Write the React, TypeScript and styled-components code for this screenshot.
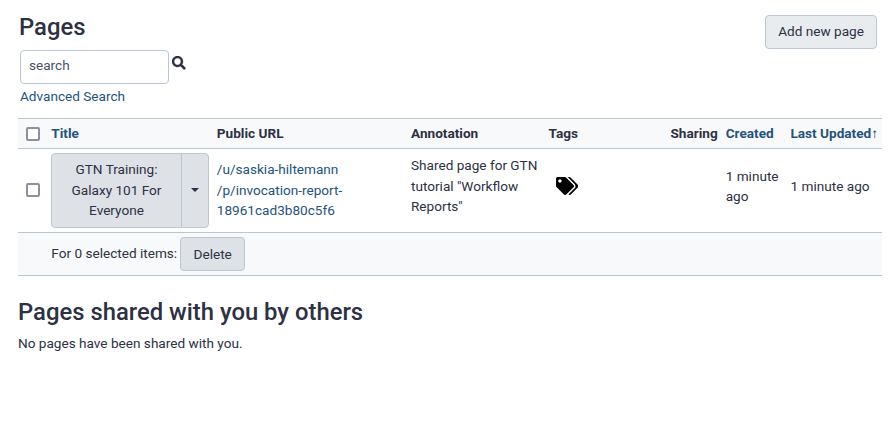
import React from "react";
import styled, { createGlobalStyle } from "styled-components";
import { FaSearch, FaTags } from "react-icons/fa";

const ink = "#2c3143";
const link = "#25537b";
const line = "#bdc6d0";

const GlobalStyle = createGlobalStyle`
  * { box-sizing: border-box; }
  body {
    margin: 0;
    background: #fff;
    color: ${ink};
    font-family: Roboto, "Noto Sans", sans-serif;
    font-size: 13.6px;
    line-height: 20.4px;
  }
`;

const Page = styled.main`
  width: 893px;
  height: 440px;
  padding: 12px 11px 0 18px;
  overflow: hidden;
`;

const TopBar = styled.header`
  display: flex;
  justify-content: space-between;
  height: 106px;
  padding-right: 5px;
`;

const Heading = styled.h2<{ $indent?: number }>`
  margin: 0 0 0 ${(p) => p.$indent ?? 0}px;
  font-size: 23.83px;
  line-height: 29px;
  font-weight: 500;
`;

const TopHeading = styled(Heading)`
  padding-top: 1px;
`;

const SearchRow = styled.div`
  display: flex;
  margin: 8px 0 2px 2px;
`;

const SearchInput = styled.input`
  width: 149px;
  height: 34px;
  padding: 0 8px 4px;
  border: 1px solid #bdc6d8;
  border-radius: 4px;
  background: #fff;
  font: inherit;
  color: #495057;
  &::placeholder { color: #4a5068; opacity: 1; }
`;

const SearchIcon = styled(FaSearch)`
  margin: 6px 0 0 3px;
  width: 13.6px;
  height: 13.6px;
  stroke: currentColor;
  stroke-width: 12;
`;

const Link = styled.a<{ $indent?: number }>`
  display: block;
  margin-left: ${(p) => p.$indent ?? 0}px;
  color: ${link};
  text-decoration: none;
`;

const Button = styled.button<{ $light?: boolean }>`
  height: 34px;
  padding: 0 12px;
  border: 1px solid #bdc6d4;
  border-radius: 4px;
  background: ${(p) => (p.$light ? "#e9ecee" : "#dee1e6")};
  color: ${ink};
  font: inherit;
`;

const AddButton = styled(Button)`
  width: 112px;
  margin-top: 3px;
  padding-bottom: 2px;
`;

const DeleteButton = styled(Button)`
  width: 65px;
`;

const Table = styled.section`
  width: 864px;
`;

const Row = styled.div<{ $height: number; $shaded?: boolean }>`
  display: grid;
  grid-template-columns: 33.3px 165.5px 194.2px 137.5px 122px 55.2px 64.8px 91.5px;
  align-items: center;
  height: ${(p) => p.$height}px;
  background: ${(p) => (p.$shaded ? "#f8f9fb" : "#fff")};
  border-top: 1px solid ${line};
`;

const HeadCell = styled.div<{ $sortable?: boolean }>`
  color: ${(p) => (p.$sortable ? link : ink)};
  font-weight: 700;
  white-space: nowrap;
`;

const Arrow = styled.span`
  color: ${ink};
  font-weight: 400;
`;

const Checkbox = styled.input<{ $lift?: number }>`
  appearance: none;
  display: block;
  width: 14px;
  height: 14px;
  margin: 0 0 ${(p) => p.$lift ?? 0}px 8px;
  border: 2px solid #8f8f9d;
  border-radius: 2px;
  background: #fff;
`;

const Cell = styled.div<{ $lift?: number }>`
  padding-bottom: ${(p) => p.$lift ?? 0}px;
`;

const SplitButton = styled.div`
  display: flex;
  width: 158px;
  height: 75px;
  margin-left: -0.3px;
  border: 1px solid #bdc6d4;
  border-radius: 4px;
  background: #dee1e6;
`;

const TitleButton = styled.button`
  width: 130px;
  padding: 0 16px 1px;
  border: 0;
  border-right: 1px solid #bdc6d4;
  background: none;
  color: ${ink};
  font: inherit;
`;

const MenuButton = styled.button`
  display: flex;
  flex: 1;
  align-items: center;
  justify-content: center;
  padding: 0 0 2px;
  border: 0;
  background: none;
  &::after {
    content: "";
    border: 4px solid transparent;
    border-top-color: ${ink};
    border-bottom: 0;
  }
`;

const TagIcon = styled(FaTags)`
  display: block;
  width: 22.5px;
  height: 18px;
  margin-left: 7.5px;
  color: #000;
`;

const Footer = styled.div`
  display: flex;
  align-items: center;
  gap: 3px;
  height: 44px;
  padding-left: 33.3px;
  border: solid ${line};
  border-width: 1px 0;
  background: #f8f9fb;
`;

const FooterLabel = styled.span`
  padding-bottom: 2px;
`;

const SharedSection = styled.section`
  padding-top: 22px;
`;

const Note = styled.p`
  margin: 6px 0 0;
`;

export default function App() {
  return (
    <Page>
      <GlobalStyle />
      <TopBar>
        <div>
          <TopHeading $indent={1}>Pages</TopHeading>
          <SearchRow>
            <SearchInput placeholder="search" />
            <SearchIcon />
          </SearchRow>
          <Link $indent={2}>Advanced Search</Link>
        </div>
        <AddButton $light>Add new page</AddButton>
      </TopBar>
      <Table>
        <Row $height={30} $shaded>
          <Checkbox type="checkbox" />
          <HeadCell $sortable>Title</HeadCell>
          <HeadCell>Public URL</HeadCell>
          <HeadCell>Annotation</HeadCell>
          <HeadCell>Tags</HeadCell>
          <HeadCell>Sharing</HeadCell>
          <HeadCell $sortable>Created</HeadCell>
          <HeadCell $sortable>
            Last Updated<Arrow>↑</Arrow>
          </HeadCell>
        </Row>
        <Row $height={84}>
          <Checkbox type="checkbox" $lift={2} />
          <SplitButton>
            <TitleButton>GTN Training: Galaxy 101 For Everyone</TitleButton>
            <MenuButton aria-label="Page options" />
          </SplitButton>
          <Cell $lift={1}>
            <Link>
              /u/saskia-hiltemann
              <br />
              /p/invocation-report-
              <br />
              18961cad3b80c5f6
            </Link>
          </Cell>
          <Cell $lift={9}>
            Shared page for GTN
            <br />
            tutorial "Workflow
            <br />
            Reports"
          </Cell>
          <Cell $lift={10}>
            <TagIcon />
          </Cell>
          <Cell />
          <Cell $lift={9}>
            1 minute
            <br />
            ago
          </Cell>
          <Cell $lift={9}>1 minute ago</Cell>
        </Row>
        <Footer>
          <FooterLabel>For 0 selected items:</FooterLabel>
          <DeleteButton>Delete</DeleteButton>
        </Footer>
      </Table>
      <SharedSection>
        <Heading>Pages shared with you by others</Heading>
        <Note>No pages have been shared with you.</Note>
      </SharedSection>
    </Page>
  );
}
